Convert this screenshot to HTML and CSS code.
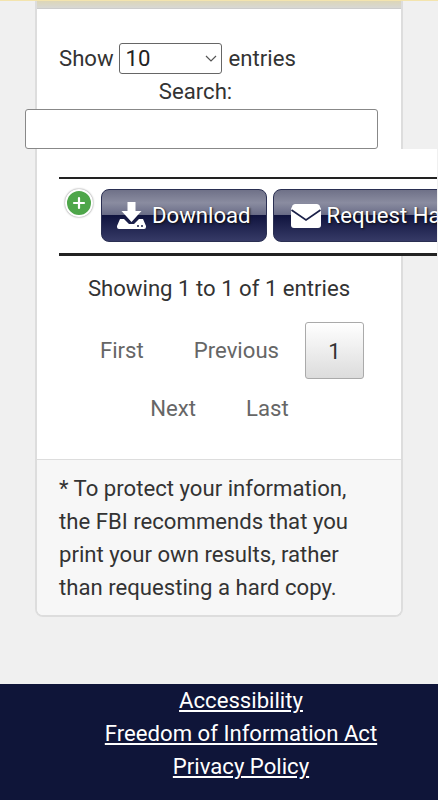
FILE: index.html
```html
<!DOCTYPE html>
<html lang="en">
<head>
    <meta charset="UTF-8">
    <meta name="viewport" content="width=device-width, initial-scale=1.0">
    <title>Results</title>
    <link rel="stylesheet" href="styles.css">
</head>
<body>
    <div class="topline"></div>
    <main class="panel">
        <div class="panel-head"></div>
        <div class="panel-body">
            <div class="length">
                Show
                <span class="select-box"><span>10</span>
                    <svg class="chev" width="12" height="7" viewBox="0 0 12 7"><path d="M1 1l5 5 5-5" fill="none" stroke="#555" stroke-width="1.2"/></svg>
                </span>
                entries
            </div>
            <div class="search-label">Search:</div>
            <div class="table-wrap">
                <input class="search" type="text" aria-label="Search">
                <div class="table-row">
                    <div class="row-inner">
                        <span class="plus">
                            <svg width="14" height="14" viewBox="0 0 14 14"><path d="M7 2v10M2 7h10" stroke="#fff" stroke-width="2.2" stroke-linecap="round"/></svg>
                        </span>
                        <a class="btn" href="#">
                            <svg width="29" height="27" viewBox="0 0 29 27"><path d="M10.500 0h8v9h6L14.500 20 4.500 9h6z" fill="#fff"/><path d="M0 24l3-7h4l5 5h5l5-5h4l3 7v1a2 2 0 0 1-2 2H2a2 2 0 0 1-2-2z" fill="#fff"/><circle cx="21" cy="24" r="1" fill="#1a2048"/><circle cx="25" cy="24" r="1" fill="#1a2048"/></svg>
                            Download
                        </a>
                        <a class="btn" href="#">
                            <svg width="30" height="24" viewBox="0 0 30 24"><path d="M4 0h22a3 3 0 0 1 2.500 1.500L30 5v16a3 3 0 0 1-3 3H3a3 3 0 0 1-3-3V5l1.500-3.500A3 3 0 0 1 4 0z" fill="#fff"/><path d="M.5 6L15 16 29.500 6" fill="none" stroke="#1a2048" stroke-width="1.600"/></svg>
                            Request Hard Copy
                        </a>
                    </div>
                </div>
            </div>
            <div class="info">Showing 1 to 1 of 1 entries</div>
            <div class="paging">
                <a href="#">First</a>
                <a href="#">Previous</a>
                <a class="current" href="#">1</a>
                <a href="#">Next</a>
                <a href="#">Last</a>
            </div>
        </div>
        <div class="panel-foot">* To protect your information, the FBI recommends that you print your own results, rather than requesting a hard copy.</div>
    </main>
    <footer class="footer">
        <a href="#">Accessibility</a>
        <a href="#">Freedom of Information Act</a>
        <a href="#">Privacy Policy</a>
    </footer>
</body>
</html>
```

FILE: styles.css
```css
html { overflow-x: hidden; }
body { margin: 0; background: #f0f0f0; color: #333; font-family: Roboto, "Liberation Sans", sans-serif; font-size: 22.15px; line-height: 33px; overflow-x: hidden; }
a { color: inherit; }

.topline { height: 1px; background: #f3e4ae; }

.panel { width: 368px; margin: 0 34px 0 35px; box-sizing: border-box; background: #fff; border: 2px solid #ddd; border-top: 0; border-radius: 0 0 8px 8px; }
.panel-head { height: 7px; background: linear-gradient(#dcd6b8, #d8d8d4); border-bottom: 1px solid #ccc; }
.panel-body { padding: 28px 22px 0; }

.length { height: 42px; display: flex; align-items: center; gap: 5px; }
.select-box { width: 103px; height: 31px; margin-right: 2px; box-sizing: border-box; border: 1px solid #666; border-radius: 3px; padding-left: 6px; display: flex; align-items: center; justify-content: space-between; color: #222; }
.chev { margin-right: 4px; }
.search-label { height: 30px; line-height: 24px; padding-right: 47px; text-align: center; }

.table-wrap { margin-left: -35px; width: 413px; }
.search { display: block; width: 353px; height: 40px; box-sizing: border-box; margin: 0 0 0 1px; border: 1px solid #888; border-radius: 3px; background: #fff; }
.table-row { margin-left: 35px; height: 107px; background: #fff; overflow: hidden; box-sizing: border-box; padding-top: 28px; }
.row-inner { border-top: 2px solid #222; border-bottom: 3px solid #222; height: 79px; box-sizing: border-box; display: flex; align-items: flex-start; white-space: nowrap; position: relative; }
.plus { position: absolute; left: 6px; top: 10px; width: 24px; height: 24px; border-radius: 50%; background: #4ea64a; border: 2px solid #fff; box-shadow: 0 0 2px #777; display: flex; align-items: center; justify-content: center; }
.btn { flex: none; margin: 10px 0 0 0; height: 53px; box-sizing: border-box; padding: 0 15px; display: flex; align-items: center; gap: 6px; color: #fff; text-decoration: none; border: 1px solid #2a2f52; border-radius: 8px; background: linear-gradient(#6f7188 0%, #8a8ca0 25%, #6a6d88 48%, #10143f 50%, #363a66 100%); text-shadow: 1px 1px 2px #111; }
.btn:first-of-type { margin-left: 42px; }
.btn + .btn { margin-left: 6px; padding-left: 17px; }

.info { text-align: center; margin-top: 16px; }
.paging { display: flex; flex-wrap: wrap; justify-content: center; align-items: center; row-gap: 1px; margin-top: 17px; padding-left: 1px; color: #666; }
.paging a { padding: 12px 25px; text-decoration: none; height: 57px; box-sizing: border-box; line-height: 33px; }
.paging a.current { width: 59px; padding: 12px 0; margin-left: 1px; text-align: center; color: #333; border: 1px solid #aaa; border-radius: 3px; background: linear-gradient(#fff, #dcdcdc); }

.panel-foot { margin-top: 22px; padding: 12px 22px 11px; background: #f7f7f7; border-top: 1px solid #ddd; border-radius: 0 0 6px 6px; }

.footer { margin-top: 67px; height: 116px; box-sizing: border-box; padding-left: 44px; background: #0f1539; color: #fff; display: flex; flex-direction: column; align-items: center; }
```
